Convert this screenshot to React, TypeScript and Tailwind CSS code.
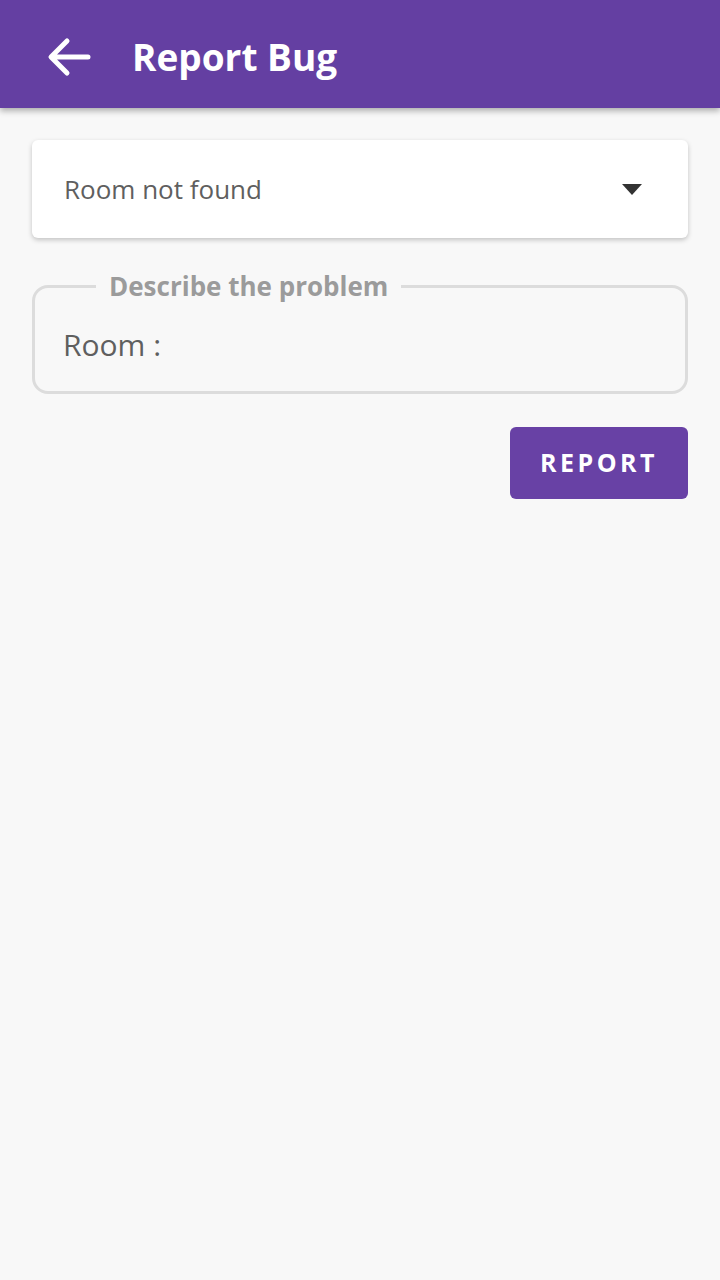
export default function App() {
	return (
		<div
			className="min-h-[1280px] w-[720px] bg-[#f8f8f8]"
			style={{ fontFamily: "'Open Sans', 'Liberation Sans', sans-serif" }}
		>
			{/* Top app bar */}
			<header className="flex h-[108px] items-center bg-[#643fa2] pt-[6px] shadow-[0_3px_6px_rgba(0,0,0,0.3)]">
				<button className="ml-[44px] flex h-[48px] w-[50px] items-center justify-center">
					<svg width="46" height="42" viewBox="0 0 46 42" fill="none">
						<path
							d="M42 21H6M21 5L5 21l16 16"
							stroke="white"
							strokeWidth="5"
							strokeLinecap="round"
							strokeLinejoin="round"
						/>
					</svg>
				</button>
				<h1 className="ml-[38px] text-[37px] font-bold tracking-[0px] text-white">Report Bug</h1>
			</header>

			<main className="flex flex-col px-[32px] pt-[32px]">
				{/* Dropdown */}
				<div className="flex h-[98px] items-center justify-between rounded-[6px] bg-white pl-[32px] pr-[46px] shadow-[0_2px_5px_rgba(0,0,0,0.22)]">
					<span className="text-[26px] text-[#5f5f5f]">Room not found</span>
					<svg width="20" height="11" viewBox="0 0 20 11">
						<path d="M0 0h20L10 11z" fill="#333" />
					</svg>
				</div>

				{/* Outlined text field */}
				<fieldset className="mt-[33px] h-[123px] rounded-[16px] border-[3px] border-[#dcdcdc] px-[28px]">
					<legend className="ml-[33px] px-[13px] text-[26px] font-bold leading-[30px] text-[#9b9b9b]">
						Describe the problem
					</legend>
					<div className="pt-[26px] text-[30px] leading-[36px] text-[#5f5f5f]">Room :</div>
				</fieldset>

				{/* Submit */}
				<div className="mt-[33px] flex justify-end">
					<button className="flex h-[72px] w-[178px] items-center justify-center rounded-[6px] bg-[#6841a5] text-[25px] font-bold tracking-[3.5px] text-white">
						REPORT
					</button>
				</div>
			</main>
		</div>
	);
}
